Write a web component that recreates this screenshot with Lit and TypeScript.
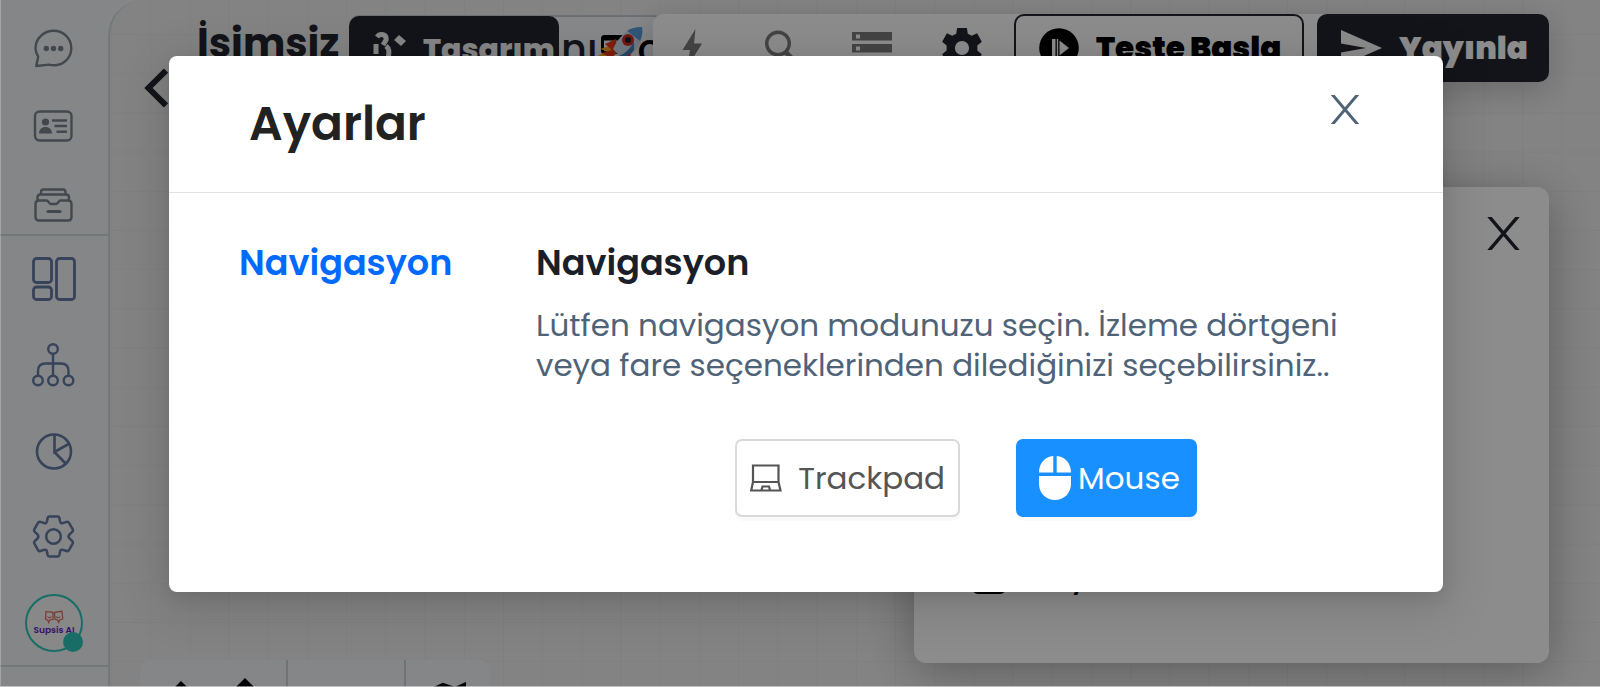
import { LitElement, html, css, svg } from "lit";
import { customElement, state } from "lit/decorators.js";

const chatIcon = html`<svg width="40" height="40" viewBox="0 0 40 40" fill="none" stroke="currentColor" stroke-width="2.400" stroke-linejoin="round"><path d="M3.200 38l2-9.300C3.600 26 2.500 23 2.500 20.200 2.500 10.500 10.800 2.800 20.700 2.800S38.300 10.500 38.300 20.200 30.500 37.300 20.700 37.300c-1.500 0-3-.3-4.500-.7z"/><g fill="currentColor" stroke="none"><circle cx="13.300" cy="20.500" r="2.700"/><circle cx="20.500" cy="20.500" r="2.700"/><circle cx="27.700" cy="20.500" r="2.700"/></g></svg>`;
const cardIcon = html`<svg width="40" height="40" viewBox="0 0 40 40" fill="none" stroke="currentColor" stroke-width="2.400"><rect x="2" y="5.500" width="36.500" height="29" rx="4.500"/><g fill="currentColor" stroke="none"><circle cx="12.500" cy="16" r="3.600"/><path d="M6 27.500c0-4 2.800-6.500 6.500-6.500s6.500 2.500 6.500 6.500z"/></g><path d="M19 14.500h15M21.500 20h12.500M23.500 25.800h10.500"/></svg>`;
const archiveIcon = html`<svg width="40" height="40" viewBox="0 0 40 40" fill="none" stroke="currentColor" stroke-width="2.400" stroke-linejoin="round" stroke-linecap="round"><path d="M8 10V8c0-1.500 1-2.500 2.500-2.500h19.500c1.500 0 2.500 1 2.500 2.500v2M4.500 16v-2.500c0-1.800 1.200-3 3-3h25.500c1.800 0 3 1.200 3 3V16M6 16.500h7.500c2 0 2.500 3.500 4.500 3.500h5c2 0 2.500-3.500 4.500-3.500h7.500c2.200 0 3.500 1.300 3.500 3.500v13c0 2.200-1.300 3.500-3.500 3.500H6c-2.200 0-3.500-1.300-3.500-3.500V20c0-2.200 1.300-3.500 3.500-3.500z"/><path d="M15 27.500h12" stroke-width="3"/></svg>`;
const layoutIcon = html`<svg width="44" height="44" viewBox="0 0 44 44" fill="none" stroke="currentColor" stroke-width="2.800"><rect x="1.500" y="1.500" width="18" height="24" rx="3"/><rect x="1.500" y="30" width="18" height="12.500" rx="3"/><rect x="24.500" y="1.500" width="18" height="41" rx="3"/></svg>`;
const flowIcon = html`<svg width="44" height="44" viewBox="0 0 44 44" fill="none" stroke="currentColor" stroke-width="2.400"><circle cx="21" cy="6" r="4.800"/><circle cx="6" cy="37.500" r="4.800"/><circle cx="21" cy="37.500" r="4.800"/><circle cx="36.500" cy="37.500" r="4.800"/><path d="M21 11v21.500M6 32.500v-4.500c0-5 3-7.500 7.500-7.500h15.500c4.500 0 7.500 2.500 7.500 7.500v4.500"/></svg>`;
const pieIcon = html`<svg width="44" height="44" viewBox="0 0 44 44" fill="none" stroke="currentColor" stroke-width="2.600"><circle cx="22" cy="22.500" r="17"/><path d="M22.500 5.500V23l15-8.500M22.500 23l12 12.500"/></svg>`;
const gearIcon = html`<svg width="44" height="44" viewBox="0 0 45 45" fill="none" stroke="currentColor" stroke-width="2.600">${svg`<path d="M17.500 1.500h9c1 0 1.300.8 1.500 1.500l.9 4.200c.2.800 1.500 1.500 2.300 1.100l4.300-1.300c1-.3 1.700 0 2.200.8l4 7c.5.900.4 1.500-.3 2.200l-3 2.900c-1.300 1.300-1.300 2.800 0 4.100l3 2.900c.7.700.8 1.300.3 2.200l-4 7c-.5.800-1.200 1.100-2.200.8l-4.300-1.300c-.8-.4-2.100.3-2.300 1.100l-.9 4.200c-.2.800-.5 1.500-1.500 1.500h-9c-1 0-1.300-.7-1.500-1.500l-.9-4.200c-.2-.8-1.500-1.500-2.300-1.100l-4.300 1.300c-1 .3-1.700 0-2.200-.8l-4-7c-.5-.9-.4-1.500.3-2.200l3-2.900c1.300-1.300 1.300-2.800 0-4.100l-3-2.900c-.7-.7-.8-1.300-.3-2.200l4-7c.5-.8 1.200-1.100 2.200-.8l4.300 1.300c.8.400 2.100-.3 2.300-1.100l.9-4.200c.2-.7.500-1.500 1.500-1.500z"/>`}<circle cx="22" cy="22" r="7.500"/></svg>`;

const backIcon = html`<svg width="24" height="40" viewBox="0 0 24 40" fill="none" stroke="currentColor" stroke-width="6"><path d="M22 2.500L4.500 20 22 37.500"/></svg>`;
const boltIcon = html`<svg width="22" height="38" viewBox="0 0 22 38" fill="currentColor"><path d="M14.500 0L1.500 21H9L6.500 38 21 14.500H13z"/></svg>`;
const searchIcon = html`<svg width="36" height="36" viewBox="0 0 36 36" fill="none" stroke="currentColor" stroke-width="3.400"><circle cx="14" cy="13.500" r="11.300"/><path d="M21.500 22l8 8" stroke-width="4.800"/></svg>`;
const listIcon = html`<svg width="40" height="32" viewBox="0 0 40 32" fill="currentColor"><path fill-rule="evenodd" d="M0 0h40v8.500H0zM4 2.500v4h4v-4zM0 12h40v8.500H0zM4 14.500v4h4v-4zM0 24h40v8H0z"/></svg>`;
const cogIcon = html`<svg width="40" height="40" viewBox="0 0 45 45" fill="currentColor"><path fill-rule="evenodd" d="M17 0h11l1 6.500 4.500 2.300 6-2.800 5.300 9.500-5 4.200v5.600l5 4.200-5.300 9.500-6-2.800-4.500 2.300-1 6.500H17l-1-6.500-4.500-2.300-6 2.800L.2 29.500l5-4.200v-5.600l-5-4.200L5.500 6l6 2.800L16 6.500zM22.500 14.500a8 8 0 100 16 8 8 0 000-16z"/></svg>`;
const playIcon = html`<svg width="40" height="40" viewBox="0 0 40 40"><circle cx="20" cy="20" r="19.800" fill="#000"/><path d="M13 11h3.500v18H13zM17.800 11h1.400v18h-1.400zM20.500 12.500L30 20l-9.500 7.500z" fill="#fff"/></svg>`;
const sendIcon = html`<svg width="41" height="36" viewBox="0 0 41 36" fill="currentColor"><path d="M0 0l41 18L0 36V22.500L25 18 0 13.500z"/></svg>`;
const designIcon = html`<svg width="36" height="36" viewBox="0 0 36 36" fill="none" stroke="currentColor" stroke-width="5"><path d="M4 5c3-4 10-3 9 3l-3 5M3 12v10M13 14c5 4 2 8 2 16"/><path d="M26 3l7 6-5 5-7-6z" fill="currentColor" stroke="none"/></svg>`;
const screenIcon = html`<svg width="24" height="28" viewBox="0 0 24 28" fill="none" stroke="#000" stroke-width="3"><rect x="1.500" y="1.500" width="21" height="16" rx="2"/><path d="M2 3.500h20" stroke-width="4"/></svg>`;
const rocketIcon = html`<svg width="48" height="48" viewBox="0 0 48 48"><path d="M14 19L2 23l7 2-9 5 10 0-8 10 14-8z" fill="#ffa51f"/><path d="M18 13L7 18l7 6-10 3 9 5 7-6z" fill="#e8371c"/><path d="M44 1C32 1 22 8 15 23l10 11C38 27 46 16 44 1z" fill="#cfe0ee"/><path d="M44 1c-6 0-11 1-15 4l13 10c2-4 3-9 2-14z" fill="#5b9fdf"/><path d="M36 24c-3 4-7 8-11 10l-4-4c7-3 12-8 15-15z" fill="#4784bd"/><path d="M32 27l3 11-9-3z" fill="#e8371c"/><circle cx="30" cy="14" r="6" fill="#d92b22"/><circle cx="30" cy="14" r="3" fill="#15202b"/></svg>`;
const closeIcon = (w: number, h: number, s: number) => html`<svg width=${w} height=${h} viewBox="0 0 28 29" fill="none" stroke="currentColor" stroke-width=${s}><path d="M0 -2L28 31M28 -2L0 31"/></svg>`;
const laptopIcon = html`<svg width="32" height="28" viewBox="0 0 32 28" fill="none" stroke="currentColor" stroke-width="2.200"><path d="M3 1.500h25.500V18H3zM3 18L1.200 26.500h29.300L28.500 18M11.500 26l1-3.500h6.500l1 3.500"/></svg>`;
const mouseIcon = html`<svg width="32" height="44" viewBox="0 0 32 44" fill="currentColor"><path d="M14.300 0v16.500H0C0 7 6 .5 14.300 0zM17.700 0C26 .5 32 7 32 16.500H17.700zM0 20h32v8c0 9-7 16-16 16S0 37 0 28z"/></svg>`;
const bubblesIcon = html`<svg width="20" height="14" viewBox="0 0 20 14" fill="none" stroke="#e0695a" stroke-width="1.200"><path d="M2 1.500l7 .8v7l-3.500.7-.8 2.500-1-2.300L1.500 9z"/><path d="M10.500 2.300l7.500-1 .8 7.500-3.300 1.200-.8 2.500-1.200-2.500-2.500-.7zM3.500 6.500c1 1.500 3 1.500 4 0M12 6.500c1 1.500 3 1.500 4 0"/></svg>`;
const diamondIcon = (size: number) => html`<svg width=${size} height=${size} viewBox="0 0 18 18"><path d="M9 0l9 9-9 9-9-9z"/></svg>`;
const mapIcon = html`<svg width="36" height="20" viewBox="0 0 36 20" fill="none" stroke="#000" stroke-width="4"><path d="M2 7l9-4 12 4 9-4v17"/></svg>`;

@customElement("app-root")
export class AppRoot extends LitElement {
  @state() private mode = "mouse";

  static styles = css`
    :host {
      display: block;
      height: 100vh;
      overflow: hidden;
      position: relative;
      font-family: Poppins, Inter, sans-serif;
      font-size: 31px;
      line-height: 40px;
      color: #24262f;
    }
    * { box-sizing: border-box; }
    svg { display: block; flex: none; }
    button, a {
      font: inherit;
      color: inherit;
      text-decoration: none;
      background: none;
      border: 0;
      padding: 0;
      cursor: pointer;
    }
    button { display: flex; align-items: center; }
    h1, h2, h3, p { margin: 0; }
    .app { display: flex; height: 100%; background: #f3f5f7; }
    .sidebar { flex: none; width: 110px; }
    .group {
      display: flex;
      flex-direction: column;
      align-items: center;
      border-bottom: 2px solid #cfd9df;
      color: #647aa4;
      gap: 26px;
      padding: 13px 2px 12px 0;
    }
    .group.first { color: #7a828f; gap: 38px; padding: 28px 5px 10px 0; }
    .entry { display: grid; place-items: center; height: 60px; }
    .first .entry { height: 40px; }
    .avatar {
      position: relative;
      display: flex;
      flex-direction: column;
      align-items: center;
      justify-content: center;
      width: 58px;
      height: 58px;
      border: 2px solid #2cc8ba;
      border-radius: 50%;
      background: #f8f8f8;
      color: #5a1fc0;
      font-size: 9px;
      font-weight: 600;
      line-height: 12px;
      white-space: nowrap;
    }
    .status {
      position: absolute;
      right: -2px;
      bottom: -2px;
      width: 20px;
      height: 20px;
      border-radius: 50%;
      background: #2cc8ba;
    }
    .canvas {
      flex: 1;
      min-width: 0;
      position: relative;
      margin-left: -2px;
      overflow: hidden;
      border-left: 2px solid #cfd9df;
      border-top-left-radius: 36px;
      background: #efefef;
      display: flex;
      flex-direction: column;
      padding: 14px 51px 0 34px;
    }
    .grid { position: absolute; inset: 0; width: 100%; height: 100%; }
    .bar { position: relative; display: flex; align-items: flex-start; height: 96px; }
    .back { margin-top: 54px; }
    .name {
      width: 152px;
      margin: 5px 0 0 29px;
      font-size: 40px;
      font-weight: 700;
      line-height: 48px;
      white-space: nowrap;
    }
    .tabs {
      flex: 1;
      display: flex;
      height: 68px;
      margin: 1px -12px 0 0;
      border-top: 2px solid #c3ccd6;
      border-radius: 10px;
      background: #f4f7fa;
      color: #000;
    }
    .tab.dark { gap: 14px; width: 210px; height: 68px; margin-top: -1px; padding-left: 24px; border-radius: 10px; background: #24262f; font-size: 30px; font-weight: 800; color: #f4f4f4; }
    .tab.light { gap: 3px; height: 64px; margin-left: 2px; font-size: 40px; font-weight: 500; color: #24262f; }
    .tab.light b { margin-left: 10px; font-weight: 500; color: #000; }
    .rocket { position: absolute; left: 454px; top: 12px; }
    .tools {
      position: relative;
      display: flex;
      align-items: center;
      height: 68px;
      padding-left: 15px;
      border-radius: 10px;
      background: #fff;
      box-shadow: 0 8px 32px rgba(0, 0, 0, .2);
      color: #7c7c7c;
    }
    .icons { display: flex; gap: 42px; margin-right: 28px; }
    .icon { width: 48px; height: 40px; justify-content: center; }
    .icon.on { color: #24262f; }
    .action { height: 68px; gap: 17px; border-radius: 10px; font-weight: 900; white-space: nowrap; }
    .test { width: 290px; padding-left: 23px; border: 2px solid #24262f; color: #000; margin-right: 13px; }
    .publish { width: 232px; padding-left: 24px; background: #24262f; color: #fff; }
    .panel {
      position: relative;
      align-self: flex-end;
      display: flex;
      flex-direction: column;
      justify-content: space-between;
      width: 635px;
      height: 476px;
      margin-top: 77px;
      border-radius: 12px;
      background: #fff;
      box-shadow: 0 8px 48px rgba(0, 0, 0, .3);
      padding: 30px 29px 69px 58px;
    }
    .panel .close { align-self: flex-end; }
    .item { display: flex; align-items: flex-end; gap: 64px; font-weight: 500; color: #000; line-height: 36px; }
    .item i { width: 34px; height: 34px; border: 4px solid #000; border-radius: 6px; }
    .controls {
      position: absolute;
      left: 30px;
      bottom: -41px;
      display: flex;
      height: 68px;
      border-radius: 10px;
      background: #f2f4f6;
    }
    .cell { display: flex; align-items: center; gap: 47px; border-right: 2px solid #cdd0dc; }
    .cell.zoom { width: 146px; height: 56px; padding-left: 34px; border: 0; }
    .cell.free { width: 120px; border-left: 2px solid #cdd0dc; }
    .cell.map { width: 84px; align-items: flex-start; padding: 22px 0 0 26px; border: 0; }
    .mask {
      position: absolute;
      z-index: 10;
      inset: 0;
      display: flex;
      align-items: flex-start;
      padding: 56px 157px 0 168px;
      background: rgba(0, 0, 0, .45);
      border-left: 1px solid rgba(255, 255, 255, .25);
      border-bottom: 1px solid rgba(255, 255, 255, .5);
    }
    .modal {
      flex: 1;
      border-radius: 8px;
      background: #fff;
      box-shadow: 0 6px 16px rgba(0, 0, 0, .08), 0 10px 48px 8px rgba(0, 0, 0, .12);
    }
    .head {
      display: flex;
      align-items: center;
      justify-content: space-between;
      height: 137px;
      padding: 0 84px 0 80px;
      border-bottom: 1px solid #e2e2e2;
    }
    .head h2 { font-size: 47px; font-weight: 600; line-height: 60px; color: #222; }
    .head .close { align-self: flex-start; margin-top: 39px; color: #4f6378; }
    .body { display: flex; padding: 50px 47px 75px 70px; }
    .menu { flex: none; width: 297px; font-size: 35px; font-weight: 600; color: #006aff; }
    .content { flex: 1; }
    .content h3 { font-size: 35px; font-weight: 600; line-height: 40px; color: #1a1f29; }
    .content p { margin-top: 22px; color: #4f6378; }
    .modes { display: flex; justify-content: center; gap: 56px; margin-top: 54px; }
    .mode {
      height: 78px;
      border: 2px solid #d9d9d9;
      border-radius: 7px;
      background: #fff;
      color: #555;
      box-shadow: 0 4px 0 rgba(0, 0, 0, .02);
      padding: 0 13px;
      gap: 16px;
    }
    .mode.active { background: #1890ff; border-color: #1890ff; color: #fff; padding: 0 15px 0 21px; gap: 7px; }
  `;

  render() {
    return html`
      <div class="app">
        <nav class="sidebar">
          <div class="group first">
            ${[["Sohbetler", chatIcon], ["Kişiler", cardIcon], ["Arşiv", archiveIcon]].map(
              ([label, icon]) => html`<a class="entry" href="#" aria-label=${label}>${icon}</a>`)}
          </div>
          <div class="group">
            ${[["Panolar", layoutIcon], ["Akışlar", flowIcon], ["Raporlar", pieIcon], ["Ayarlar", gearIcon]].map(
              ([label, icon]) => html`<a class="entry" href="#" aria-label=${label}>${icon}</a>`)}
            <a class="entry" href="#"><span class="avatar">${bubblesIcon}Supsis AI<span class="status"></span></span></a>
          </div>
        </nav>
        <main class="canvas">
          <svg class="grid" aria-hidden="true">
            <pattern id="cells" x="1" y="34" width="39.200" height="39.200" patternUnits="userSpaceOnUse">
              <path d="M0 .5H40M.5 0V40" stroke="#e7e8ea" fill="none"/>
            </pattern>
            <rect width="100%" height="100%" fill="url(#cells)"/>
          </svg>
          <header class="bar">
            <button class="back" aria-label="Geri">${backIcon}</button>
            <h1 class="name">İsimsiz</h1>
            <div class="tabs">
              <button class="tab dark">${designIcon}Tasarım</button>
              <button class="tab light">nı${screenIcon}<b>c</b></button>
            </div>
            <span class="rocket">${rocketIcon}</span>
            <div class="tools">
              <div class="icons">
                <button class="icon" aria-label="Tetikleyiciler">${boltIcon}</button>
                <button class="icon" aria-label="Ara">${searchIcon}</button>
                <button class="icon" aria-label="Liste">${listIcon}</button>
                <button class="icon on" aria-label="Ayarlar">${cogIcon}</button>
              </div>
              <button class="action test">${playIcon}Teste Basla</button>
              <button class="action publish">${sendIcon}Yayınla</button>
            </div>
          </header>
          <aside class="panel">
            <button class="close" aria-label="Paneli kapat">${closeIcon(33, 33, 3)}</button>
            <div class="item"><i></i>y</div>
          </aside>
          <div class="controls">
            <div class="cell zoom">${diamondIcon(14)}${diamondIcon(20)}</div>
            <div class="cell free"></div>
            <div class="cell map">${mapIcon}</div>
          </div>
        </main>
      </div>
      <div class="mask">
        <section class="modal" role="dialog" aria-modal="true" aria-labelledby="title">
          <div class="head">
            <h2 id="title">Ayarlar</h2>
            <button class="close" aria-label="Kapat">${closeIcon(28, 29, 3)}</button>
          </div>
          <div class="body">
            <nav class="menu"><a href="#">Navigasyon</a></nav>
            <div class="content">
              <h3>Navigasyon</h3>
              <p>Lütfen navigasyon modunuzu seçin. İzleme dörtgeni veya fare seçeneklerinden dilediğinizi seçebilirsiniz..</p>
              <div class="modes">
                <button class="mode ${this.mode === "trackpad" ? "active" : ""}" @click=${() => (this.mode = "trackpad")}>${laptopIcon}Trackpad</button>
                <button class="mode ${this.mode === "mouse" ? "active" : ""}" @click=${() => (this.mode = "mouse")}>${mouseIcon}Mouse</button>
              </div>
            </div>
          </div>
        </section>
      </div>
    `;
  }
}
